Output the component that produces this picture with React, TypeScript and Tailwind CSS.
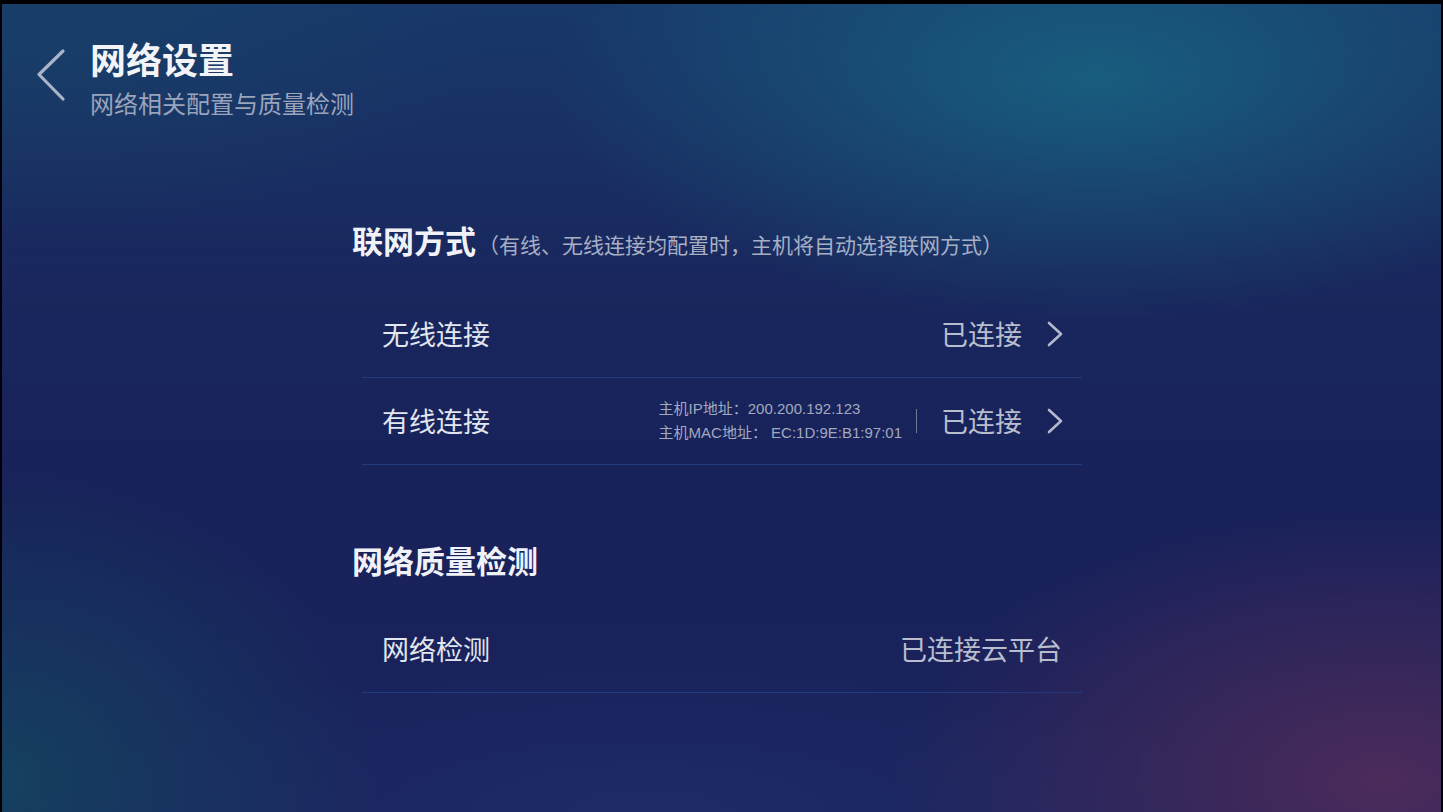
import React from "react";

function BackChevron() {
  return (
    <svg width="30" height="56" viewBox="0 0 30 56" className="mt-[12px] shrink-0">
      <polyline
        points="27,3 3,26.5 27,51"
        fill="none"
        stroke="#a9b4c8"
        strokeWidth="3.2"
        strokeLinecap="round"
        strokeLinejoin="round"
      />
    </svg>
  );
}

function RowChevron() {
  return (
    <svg width="18" height="28" viewBox="0 0 18 28" className="shrink-0 ml-[24px]">
      <polyline
        points="3,3 15,14 3,25"
        fill="none"
        stroke="#b3b8ca"
        strokeWidth="2.6"
        strokeLinecap="round"
        strokeLinejoin="round"
      />
    </svg>
  );
}

export default function App() {
  return (
    <div className="w-[1443px] h-[812px] overflow-hidden bg-black font-['Noto_Sans_CJK_SC','Noto_Sans',sans-serif]">
      <div className="h-[4px] bg-black" />
      <div className="h-[808px] ml-[2px] mr-[2px] bg-[#18215a] bg-[image:radial-gradient(ellipse_38%_30%_at_76%_9%,rgba(24,100,130,0.85),rgba(24,100,130,0)),radial-gradient(ellipse_30%_26%_at_4%_2%,rgba(24,66,104,0.7),rgba(24,66,104,0)),radial-gradient(ellipse_26%_40%_at_0%_96%,rgba(20,74,98,0.75),rgba(20,74,98,0)),radial-gradient(ellipse_34%_34%_at_96%_96%,rgba(84,44,90,0.85),rgba(84,44,90,0)),radial-gradient(ellipse_40%_20%_at_45%_100%,rgba(32,48,110,0.6),rgba(32,48,110,0)),linear-gradient(to_bottom,#18386a_0%,#19285e_32%,#18215a_60%,#1a235c_100%)]">
        {/* Header */}
        <div className="flex items-start pl-[34px] pt-[32px]">
          <BackChevron />
          <div className="ml-[24px] flex flex-col">
            <div className="h-[44px] leading-[44px] text-[36px] font-bold text-[#f2f4f8]">
              网络设置
            </div>
            <div className="mt-[8px] h-[30px] leading-[30px] text-[24px] text-[#9aa4bc]">
              网络相关配置与质量检测
            </div>
          </div>
        </div>

        {/* Main */}
        <div className="ml-[350px] w-[730px] mt-[102px]">
          <div className="flex items-baseline h-[40px] leading-[40px]">
            <span className="text-[31px] font-bold text-[#f0f2f8]">联网方式</span>
            <span className="ml-[2px] text-[21px] text-[#a7afc4]">
              （有线、无线连接均配置时，主机将自动选择联网方式）
            </span>
          </div>

          <div className="mt-[31px] ml-[10px] w-[720px]">
            <div className="h-[87px] border-b border-[#233a7c] flex items-center pl-[20px] pr-[18px]">
              <span className="text-[27px] text-[#e2e6ef]">无线连接</span>
              <span className="ml-auto text-[27px] text-[#b9bece]">已连接</span>
              <RowChevron />
            </div>
            <div className="h-[87px] border-b border-[#233a7c] flex items-center pl-[20px] pr-[18px]">
              <span className="text-[27px] text-[#e2e6ef]">有线连接</span>
              <div className="ml-auto flex flex-col text-[15px] leading-[24px] text-[#a3a9be] font-['Liberation_Sans','Noto_Sans_CJK_SC',sans-serif]">
                <span>主机IP地址：200.200.192.123</span>
                <span>主机MAC地址：&nbsp;EC:1D:9E:B1:97:01</span>
              </div>
              <div className="ml-[14px] w-px h-[24px] bg-[#6f7896]" />
              <span className="ml-[24px] text-[27px] text-[#b9bece]">已连接</span>
              <RowChevron />
            </div>
          </div>

          <div className="mt-[75px] h-[40px] leading-[40px] text-[31px] font-bold text-[#f0f2f8]">
            网络质量检测
          </div>

          <div className="mt-[27px] ml-[10px] w-[720px]">
            <div className="h-[86px] border-b border-[#233a7c] flex items-center pl-[20px] pr-[20px]">
              <span className="text-[27px] text-[#e2e6ef]">网络检测</span>
              <span className="ml-auto text-[27px] text-[#b9bece]">已连接云平台</span>
            </div>
          </div>
        </div>
      </div>
    </div>
  );
}
